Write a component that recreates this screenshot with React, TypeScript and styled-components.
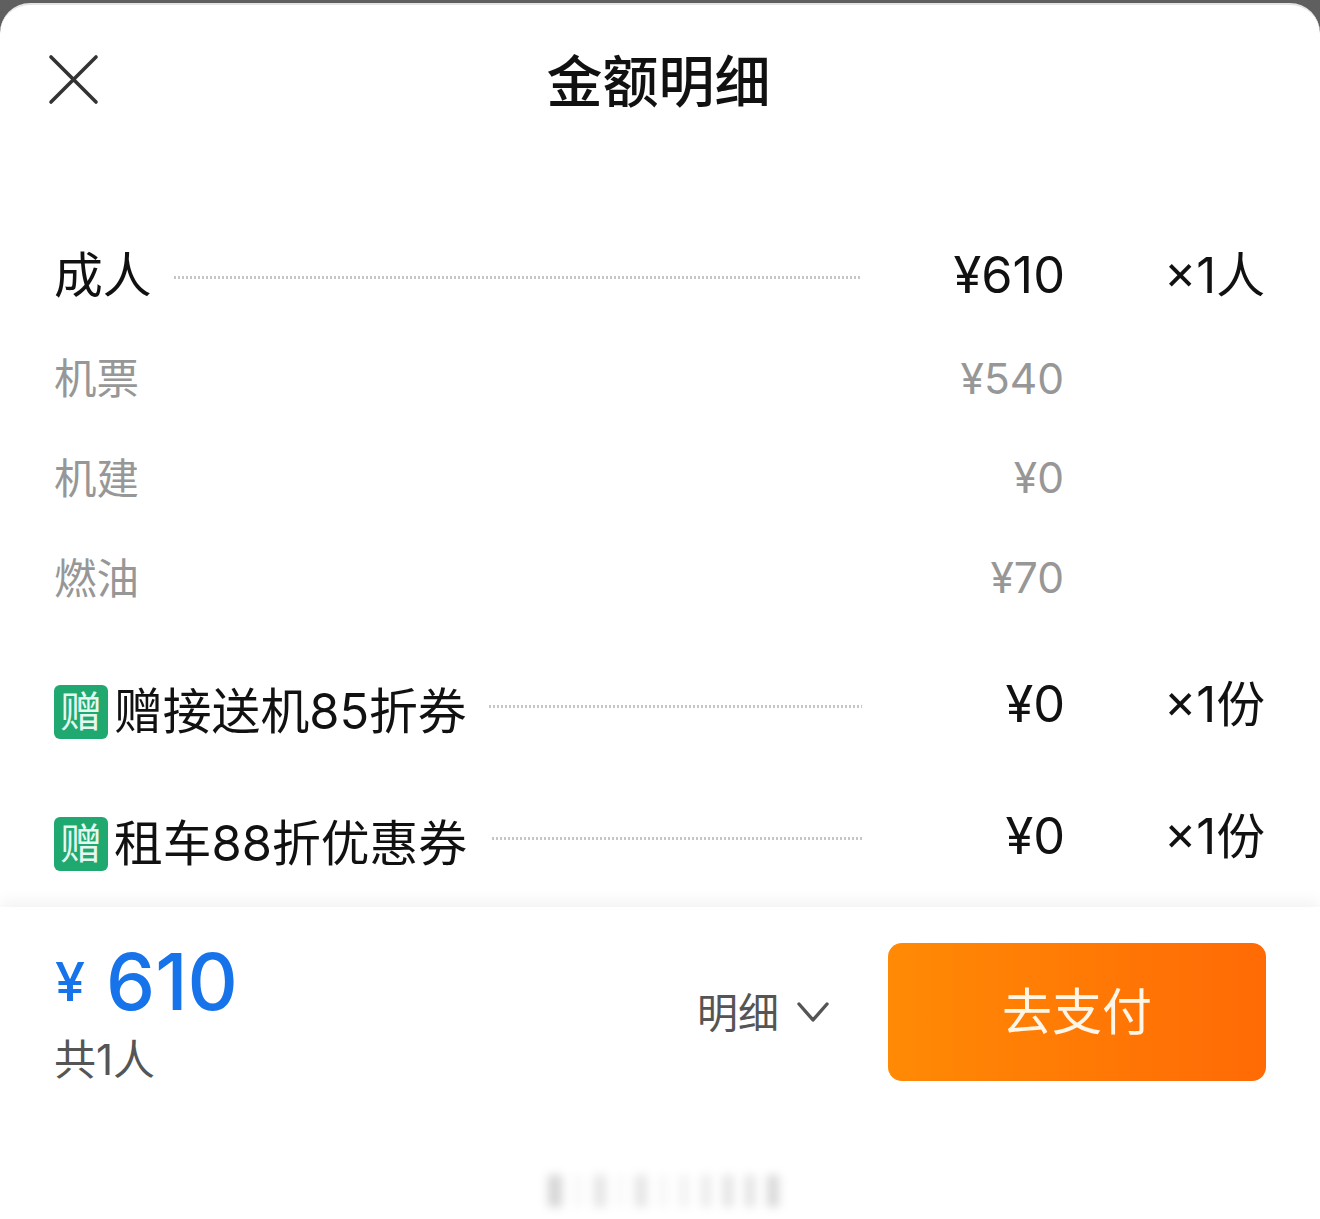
import React from "react";
import styled, { createGlobalStyle } from "styled-components";

const GlobalStyle = createGlobalStyle`
  html, body {
    margin: 0;
    padding: 0;
    background: #5f5f5f;
  }
  body {
    font-family: Inter, "Noto Sans CJK SC", sans-serif;
  }
`;

const Page = styled.div`
  width: 1320px;
  height: 1219px;
  padding-top: 3px;
  box-sizing: border-box;
  overflow: hidden;
`;

const Sheet = styled.div`
  position: relative;
  height: 1216px;
  box-sizing: border-box;
  display: flex;
  flex-direction: column;
  background: #fff;
  border-top: 2px solid #e4e4e4;
  border-radius: 30px 30px 0 0;
`;

const Header = styled.header`
  position: relative;
  height: 155px;
  display: flex;
  align-items: center;
  justify-content: center;
  padding-bottom: 1px;
  box-sizing: border-box;
`;

const CloseButton = styled.button`
  position: absolute;
  left: 48px;
  top: 49px;
  width: 52px;
  height: 52px;
  padding: 0;
  border: 0;
  background: none;
  color: #333;
`;

const Title = styled.h1`
  margin: 0;
  font-size: 56px;
  line-height: 70px;
  font-weight: 500;
  color: #111;
  padding-right: 3px;
`;

const Rows = styled.div`
  flex: 1;
  padding: 76px 55px 0 54px;
  display: flex;
  flex-direction: column;
`;

const Row = styled.div<{ $height: number; $gap?: number; $muted?: boolean }>`
  height: ${(p) => p.$height}px;
  margin-top: ${(p) => p.$gap ?? 0}px;
  display: grid;
  grid-template-columns: 808px 201px 202px;
  align-items: center;
  font-size: ${(p) => (p.$muted ? 42.5 : 48.8)}px;
  color: ${(p) => (p.$muted ? "#979797" : "#111")};
`;

const LabelCell = styled.div<{ $raise?: number }>`
  display: flex;
  align-items: center;
  min-width: 0;
  padding-bottom: ${(p) => p.$raise ?? 0}px;
`;

const LabelText = styled.span`
  white-space: nowrap;
`;

// leader line between a label and its price, $shift nudges it off the row centre
const Leader = styled.span<{ $gap?: number; $shift: number }>`
  flex: 1;
  height: 3px;
  margin-left: ${(p) => p.$gap ?? 22}px;
  margin-top: ${(p) => Math.max(p.$shift * 2, 0)}px;
  margin-bottom: ${(p) => Math.max(-p.$shift * 2, 0)}px;
  background: linear-gradient(90deg, #c6c6c6 50%, transparent 50%) 0 0 / 4px 3px repeat-x;
`;

const Badge = styled.span`
  flex: none;
  width: 54px;
  height: 54px;
  margin-top: 8px;
  margin-right: 6px;
  border-radius: 6px;
  background: #1fa971;
  color: #e6f7ef;
  font-size: 42px;
  font-weight: 400;
  line-height: 54px;
  text-align: center;
`;

const Price = styled.span<{ $large?: boolean; $raise?: number; $drop?: number }>`
  text-align: right;
  white-space: nowrap;
  margin-right: ${(p) => (p.$large ? -2 : -1)}px;
  font-size: ${(p) => (p.$large ? "50.5px" : "inherit")};
  padding-bottom: ${(p) => p.$raise ?? 0}px;
  padding-top: ${(p) => p.$drop ?? 0}px;
`;

const Count = styled.span<{ $raise?: number }>`
  text-align: right;
  white-space: nowrap;
  padding-bottom: ${(p) => p.$raise ?? 0}px;
`;

const Footer = styled.footer`
  position: relative;
  height: 312px;
  box-sizing: border-box;
  padding: 36px 54px 0 54px;
  display: flex;
  align-items: flex-start;
  background: #fff;
  box-shadow: 0 -6px 14px rgba(0, 0, 0, 0.05);
`;

const Totals = styled.div`
  flex: 1;
  display: flex;
  flex-direction: column;
`;

const Amount = styled.div`
  display: flex;
  align-items: center;
  height: 76px;
  color: #1673ea;
`;

const Currency = styled.span`
  width: 52px;
  padding-left: 1px;
  box-sizing: border-box;
  font-size: 54px;
  font-weight: 500;
`;

const AmountValue = styled.span`
  font-size: 78px;
  font-weight: 500;
`;

const Travelers = styled.div`
  margin-top: 17px;
  font-size: 42px;
  line-height: 48px;
  color: #555;
`;

const DetailToggle = styled.div`
  height: 138px;
  display: flex;
  align-items: center;
  gap: 18px;
  margin-right: 59px;
  font-size: 41px;
  color: #555;
`;

const DetailLabel = styled.span`
  padding-bottom: 4px;
`;

const PayButton = styled.button`
  width: 378px;
  height: 138px;
  padding: 0 0 8px;
  border: 0;
  border-radius: 14px;
  background: linear-gradient(90deg, #ff8a05, #ff6a05);
  color: #fff6e8;
  font-family: inherit;
  font-size: 50px;
  font-weight: 400;
`;

const Watermark = styled.div`
  position: absolute;
  left: 548px;
  bottom: 12px;
  display: flex;
  align-items: flex-end;
  gap: 12px;
  filter: blur(5px);
`;

const WatermarkBar = styled.span<{ $w: number; $tone: number }>`
  width: ${(p) => p.$w}px;
  height: 32px;
  background: rgba(0, 0, 0, ${(p) => p.$tone});
`;

const marks: [number, number][] = [
  [14, 0.16], [8, 0.03], [12, 0.1], [5, 0.04], [12, 0.1], [8, 0.04],
  [10, 0.05], [10, 0.08], [10, 0.11], [10, 0.11], [12, 0.15],
];

const App: React.FC = () => (
  <Page>
    <GlobalStyle />
    <Sheet>
      <Header>
        <CloseButton aria-label="关闭">
          <svg width="52" height="52" viewBox="0 0 52 52" fill="none" stroke="currentColor" strokeWidth="3.6" strokeLinecap="round">
            <path d="M3 3L48 48M48 3L3 48" />
          </svg>
        </CloseButton>
        <Title>金额明细</Title>
      </Header>
      <Rows>
        <Row $height={70}>
          <LabelCell $raise={6}>
            <LabelText>成人</LabelText>
            <Leader $shift={5.5} />
          </LabelCell>
          <Price $large>¥610</Price>
          <Count $raise={6}>×1人</Count>
        </Row>
        <Row $height={100} $gap={19} $muted>
          <LabelCell><LabelText>机票</LabelText></LabelCell>
          <Price $drop={7}>¥540</Price>
        </Row>
        <Row $height={100} $muted>
          <LabelCell><LabelText>机建</LabelText></LabelCell>
          <Price $drop={5}>¥0</Price>
        </Row>
        <Row $height={100} $muted>
          <LabelCell><LabelText>燃油</LabelText></LabelCell>
          <Price $drop={5}>¥70</Price>
        </Row>
        <Row $height={70} $gap={40}>
          <LabelCell>
            <Badge>赠</Badge>
            <LabelText>赠接送机85折券</LabelText>
            <Leader $shift={-1} />
          </LabelCell>
          <Price $large $raise={8}>¥0</Price>
          <Count $raise={14}>×1份</Count>
        </Row>
        <Row $height={70} $gap={62}>
          <LabelCell>
            <Badge>赠</Badge>
            <LabelText>租车88折优惠券</LabelText>
            <Leader $gap={25} $shift={-1} />
          </LabelCell>
          <Price $large $raise={8}>¥0</Price>
          <Count $raise={14}>×1份</Count>
        </Row>
      </Rows>
      <Footer>
        <Totals>
          <Amount>
            <Currency>¥</Currency>
            <AmountValue>610</AmountValue>
          </Amount>
          <Travelers>共1人</Travelers>
        </Totals>
        <DetailToggle>
          <DetailLabel>明细</DetailLabel>
          <svg width="32" height="22" viewBox="0 0 32 22" fill="none" stroke="currentColor" strokeWidth="3.4" strokeLinecap="round" strokeLinejoin="round">
            <path d="M2 3L16 19L30 3" />
          </svg>
        </DetailToggle>
        <PayButton>去支付</PayButton>
        <Watermark>
          {marks.map(([w, tone], i) => (
            <WatermarkBar key={i} $w={w} $tone={tone} />
          ))}
        </Watermark>
      </Footer>
    </Sheet>
  </Page>
);

export default App;
